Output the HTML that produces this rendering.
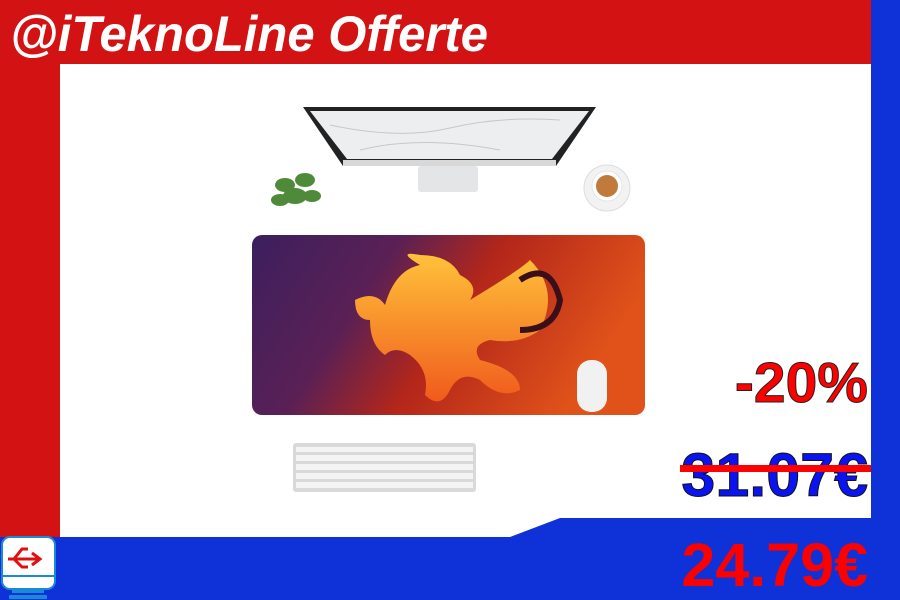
<!DOCTYPE html>
<html><head><meta charset="utf-8"><style>
html,body{margin:0;padding:0}
body{width:900px;height:600px;position:relative;overflow:hidden;background:#fff;font-family:"Liberation Sans",sans-serif}
.t{position:absolute;font-weight:bold;white-space:nowrap}
</style></head><body>
<svg width="900" height="600" style="position:absolute;left:0;top:0">
<defs>
<linearGradient id="pad" x1="0" y1="0" x2="1" y2="0.3">
<stop offset="0" stop-color="#3c1f5e"/><stop offset="0.35" stop-color="#5a2055"/><stop offset="0.6" stop-color="#b3261a"/><stop offset="1" stop-color="#e0521a"/></linearGradient>
<linearGradient id="dr" x1="0" y1="0" x2="0" y2="1"><stop offset="0" stop-color="#ffc23a"/><stop offset="1" stop-color="#f05a1c"/></linearGradient>
</defs>
<rect x="0" y="0" width="900" height="600" fill="#d31313"/>
<rect x="60" y="64" width="811" height="473" fill="#fff"/>
<rect x="871" y="0" width="29" height="600" fill="#0f32d8"/>
<polygon points="0,537 510,537 560,518 871,518 871,600 0,600" fill="#0f32d8"/>
<polygon points="303,107 596,107 556,166 343,166" fill="#222"/>
<polygon points="310,111 589,111 552,159 347,159" fill="#eceeef"/>
<path d="M330,125 Q400,140 450,128 T560,120 M360,150 Q420,135 500,150" stroke="#c8c8c8" fill="none"/>
<rect x="343" y="160" width="213" height="6" fill="#d8d8d8"/>
<rect x="418" y="166" width="60" height="26" rx="3" fill="#e3e5e6"/>
<g fill="#4f8a3a"><ellipse cx="285" cy="185" rx="10" ry="7"/><ellipse cx="305" cy="180" rx="10" ry="7"/><ellipse cx="295" cy="196" rx="12" ry="8"/><ellipse cx="280" cy="200" rx="9" ry="6"/><ellipse cx="312" cy="196" rx="9" ry="6"/></g>
<circle cx="607" cy="188" r="23" fill="#f2f2f2" stroke="#ddd"/><circle cx="607" cy="186" r="15" fill="#fff" stroke="#e5e5e5"/><circle cx="607" cy="186" r="11" fill="#c07a3c"/>
<rect x="252" y="235" width="393" height="180" rx="10" fill="url(#pad)"/>
<path d="M355,300 Q375,290 385,305 Q395,270 420,265 Q395,250 420,255 Q450,255 460,275 Q480,285 470,300 Q520,270 530,260 Q560,290 540,330 Q520,345 490,340 Q470,345 480,360 Q520,370 520,390 Q500,400 480,380 Q460,370 450,390 Q440,410 425,395 Q430,370 410,355 Q395,345 385,355 Q370,345 370,320 Q355,320 355,300Z" fill="url(#dr)"/>
<path d="M520,280 Q550,260 560,300 Q555,330 520,330" stroke="#3a0f1a" stroke-width="6" fill="none"/>
<rect x="577" y="360" width="30" height="52" rx="14" fill="#f1f1f1"/>
<rect x="293" y="443" width="183" height="49" rx="3" fill="#d9d9d9"/>
<g fill="#f4f4f4">
<rect x="296" y="447" width="177" height="5"/><rect x="296" y="455" width="177" height="6"/><rect x="296" y="464" width="177" height="6"/><rect x="296" y="473" width="177" height="6"/><rect x="296" y="482" width="177" height="6"/></g>
<rect x="2" y="537" width="53" height="52" rx="8" fill="#fff" stroke="#1a8ad6" stroke-width="2"/>
<rect x="2" y="575" width="53" height="2" fill="#1a8ad6"/>
<rect x="12" y="589" width="32" height="4" fill="#1a8ad6"/>
<rect x="9" y="595" width="38" height="4" fill="#1a8ad6"/>
<path d="M8,559 H38 M32,553 L40,559 L32,565 M14,559 L22,549 H28 M14,559 L22,567 H28" stroke="#e01010" stroke-width="3" fill="none"/>
</svg>
<div class="t" style="left:10px;top:5px;font-size:50px;font-style:italic;color:#fff;transform:scaleX(0.98);transform-origin:left">@iTeknoLine Offerte</div>
<div class="t" style="right:32px;top:350px;font-size:57px;color:#ff0000;-webkit-text-stroke:1px #222">-20%</div>
<div class="t" style="right:32px;top:440px;font-size:61px;color:#0a14f0;-webkit-text-stroke:1px #111">31.07€</div>
<div style="position:absolute;left:680px;top:465px;width:191px;height:7px;background:#ff0000"></div>
<div class="t" style="right:32px;top:530px;font-size:61px;color:#ff0000">24.79€</div>
</body></html>
